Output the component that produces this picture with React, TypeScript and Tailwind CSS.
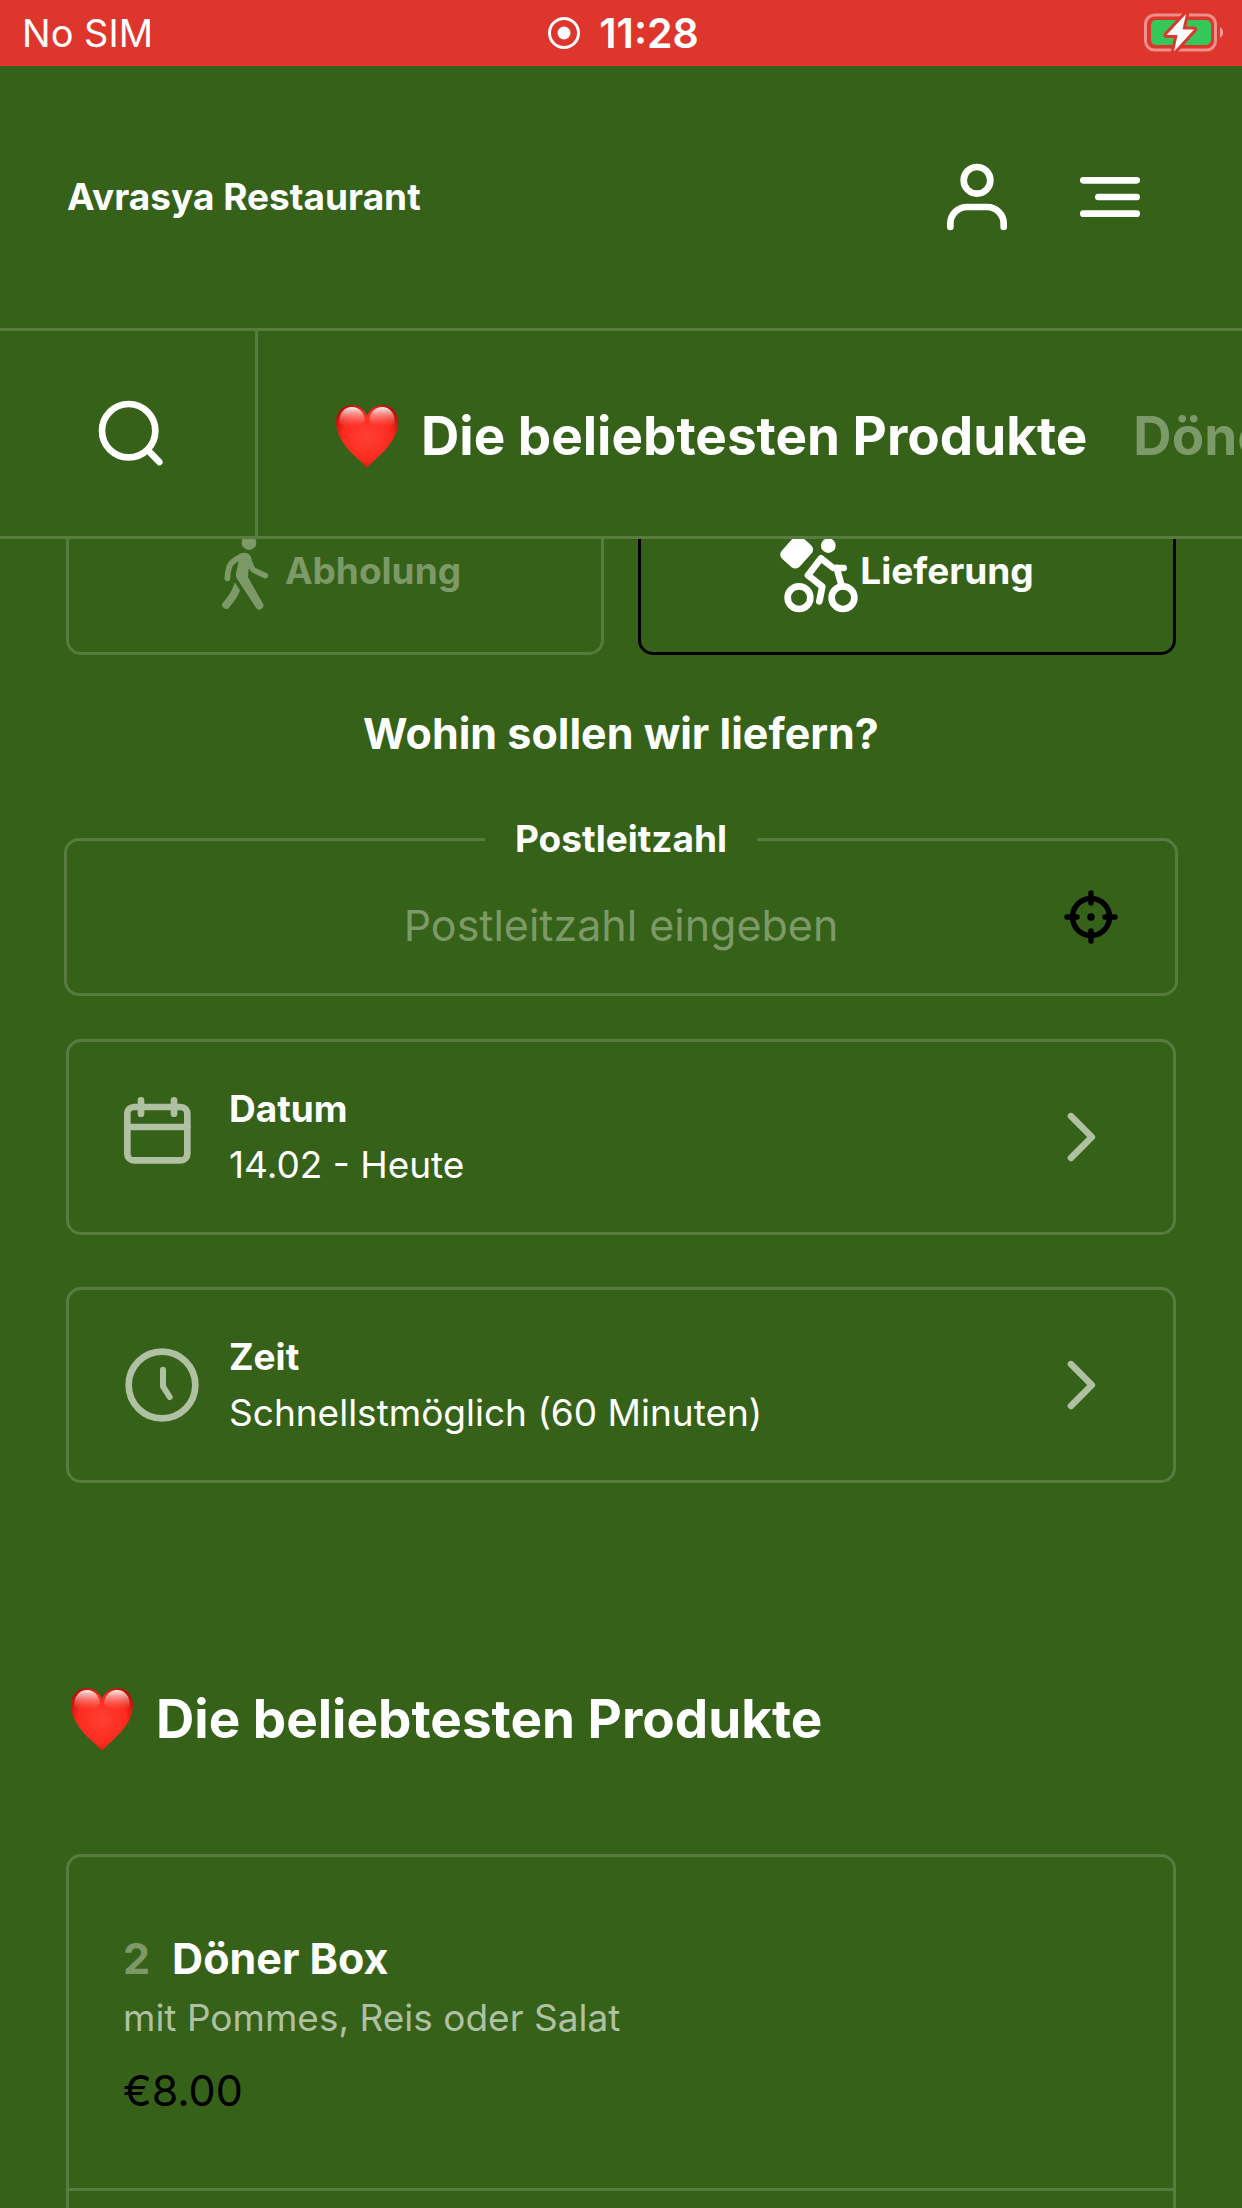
import { useState } from 'react';
import type { ReactNode } from 'react';

const categories = ['Die beliebtesten Produkte', 'Döner'];

const products = [
  { id: 2, name: 'Döner Box', description: 'mit Pommes, Reis oder Salat', price: '€8.00' },
];

function HeartIcon() {
  return (
    <svg viewBox="0 0 72 72" className="h-[72px] w-[72px] shrink-0" aria-hidden="true">
      <defs>
        <radialGradient id="heart-body" cx="0.5" cy="0.5" r="0.6">
          <stop offset="0" stopColor="#ff4034" />
          <stop offset="0.65" stopColor="#fd2a1f" />
          <stop offset="1" stopColor="#b50d03" />
        </radialGradient>
        <linearGradient id="heart-shine" x1="0" y1="0" x2="0" y2="1">
          <stop offset="0" stopColor="#fff" stopOpacity="0.95" />
          <stop offset="1" stopColor="#ff6a60" stopOpacity="0" />
        </linearGradient>
      </defs>
      <path
        d="M36 68C29 59 5 44 5 22C5 12 12 5 20.500 5C28 5 33.500 9.500 36 16C38.500 9.500 44 5 51.500 5C60 5 67 12 67 22C67 44 43 59 36 68Z"
        fill="url(#heart-body)"
      />
      <path d="M8.500 24C7 13 14 7 21 7C28 7 32.500 12 34 20C30 28 14 30 8.500 24Z" fill="url(#heart-shine)" />
      <path d="M63.500 24C65 13 58 7 51 7C44 7 39.500 12 38 20C42 28 58 30 63.500 24Z" fill="url(#heart-shine)" />
    </svg>
  );
}

function LineIcon({ children }: { children: ReactNode }) {
  return (
    <svg
      viewBox="0 0 24 24"
      className="h-20 w-20 shrink-0"
      fill="none"
      stroke="currentColor"
      strokeWidth="2"
      strokeLinecap="round"
      strokeLinejoin="round"
      aria-hidden="true"
    >
      {children}
    </svg>
  );
}

function WalkerIcon() {
  return (
    <svg viewBox="12 -3 180 252" className="h-[84px] w-[60px] shrink-0" fill="none" aria-hidden="true">
      <circle cx="132" cy="38" r="22" fill="currentColor" />
      {/* torso and front leg */}
      <path
        d="M100 74Q112 67 124 69Q134 71 138 82L143 102L131 118L129 142L173 219A12 12 0 0 1 153 233L97 148Q91 140 93 130L100 100Z"
        fill="currentColor"
      />
      {/* rear leg */}
      <path d="M89 157L105 181Q98 203 72 233A12 12 0 0 1 53 219Q82 187 89 157Z" fill="currentColor" />
      <g stroke="currentColor" strokeWidth="17" strokeLinecap="round" strokeLinejoin="round">
        <path d="M110 79Q80 92 73 109Q68 125 67 145" />
        <path d="M131 92L141 114Q144 120 151 123L181 137" />
      </g>
    </svg>
  );
}

function CourierIcon() {
  return (
    <svg viewBox="60 -3 240 252" className="h-[84px] w-20 shrink-0" fill="none" aria-hidden="true">
      <rect x="74" y="22" width="72" height="88" rx="17" fill="currentColor" transform="rotate(42 110 66)" />
      <circle cx="205" cy="47" r="22" fill="currentColor" />
      <g stroke="currentColor" strokeWidth="20" strokeLinecap="round" strokeLinejoin="round">
        <circle cx="117" cy="203" r="34" />
        <circle cx="249" cy="203" r="34" />
        <path d="M178 214L187 170L144 136L183 85L220 114H251" />
        <path d="M230 114L243 160" />
      </g>
    </svg>
  );
}

function BatteryIcon() {
  return (
    <svg viewBox="0 0 80 40" className="h-10 w-20" aria-hidden="true">
      <rect x="1.500" y="2" width="70" height="35" rx="9" fill="none" stroke="#fff" strokeOpacity="0.45" strokeWidth="3" />
      <path d="M76 14c4 2 4 9 0 11Z" fill="#fff" fillOpacity="0.5" />
      <rect x="7" y="7" width="60" height="25" rx="5" fill="#34c759" />
      <path
        d="M42 1L22.500 22H33.500L30 38.500L50 16.500H38.500Z"
        fill="#fff"
        stroke="#de362d"
        strokeWidth="6"
        strokeLinejoin="round"
        paintOrder="stroke"
      />
    </svg>
  );
}

function StatusBar() {
  return (
    <div className="grid h-[66px] grid-cols-3 items-center bg-[#de362d] pl-[22px] pr-[18px]">
      <span className="text-[38px] leading-[48px]">No SIM</span>
      <div className="flex items-center justify-center gap-[18px]">
        <svg viewBox="0 0 34 34" className="h-[34px] w-[34px]" aria-hidden="true">
          <circle cx="17" cy="17" r="14.500" fill="none" stroke="#fff" strokeWidth="3" />
          <circle cx="17" cy="17" r="6.500" fill="#fff" />
        </svg>
        <span className="text-[41px] font-semibold leading-[48px]">11:28</span>
      </div>
      <div className="flex justify-end">
        <BatteryIcon />
      </div>
    </div>
  );
}

interface OptionCardProps {
  icon: ReactNode;
  label: string;
  value: string;
}

function OptionCard({ icon, label, value }: OptionCardProps) {
  return (
    <button
      type="button"
      className="flex h-[196px] w-full items-center gap-[27px] rounded-[15px] border-[3px] border-[#587c40] pl-[53px] pr-[52px] text-left"
    >
      <span className="text-[#afc0a3]">{icon}</span>
      <span className="flex flex-1 flex-col text-[37px] leading-[56px]">
        <span className="font-bold">{label}</span>
        <span>{value}</span>
      </span>
      <span className="text-[#afc0a3]">
        <LineIcon>
          <path d="M9 5.750L15.250 12L9 18.250" />
        </LineIcon>
      </span>
    </button>
  );
}

export default function App() {
  const [mode, setMode] = useState<'pickup' | 'delivery'>('delivery');
  const [zip, setZip] = useState('');

  const modeClass = (active: boolean) =>
    active ? 'border-black text-white' : 'border-[#587c40] text-[#7d9968]';

  return (
    <div className="flex h-screen flex-col overflow-hidden bg-[#366118] font-['Inter','Liberation_Sans',sans-serif] text-white">
      {/* Fixed top area */}
      <div className="relative z-10 shrink-0 bg-[#366118]">
        <StatusBar />
        <header className="flex h-[262px] items-center justify-between pl-[67px] pr-[92px]">
          <a href="#" className="text-[37px] font-bold leading-[48px]">Avrasya Restaurant</a>
          <div className="flex gap-[53px]">
            <button type="button" aria-label="Konto">
              <LineIcon>
                <circle cx="12" cy="7" r="4" />
                <path d="M4 21v-1a5 5 0 0 1 5-5h6a5 5 0 0 1 5 5v1" />
              </LineIcon>
            </button>
            <button type="button" aria-label="Menü">
              <LineIcon>
                <path d="M4 7h16M8.500 12H20M4 17h16" />
              </LineIcon>
            </button>
          </div>
        </header>
        <div className="flex h-[211px] border-y-[3px] border-[#587c40]">
          <button
            type="button"
            aria-label="Suche"
            className="flex w-[258px] shrink-0 items-center border-r-[3px] border-[#587c40] pl-[92px]"
          >
            <LineIcon>
              <circle cx="11" cy="11" r="8" />
              <path d="M20.200 20.400L16.900 17" />
            </LineIcon>
          </button>
          <nav className="flex flex-1 items-center gap-[46px] overflow-hidden whitespace-nowrap pl-[73px] pt-1 text-[53px] font-bold leading-[72px]">
            {categories.map((name, i) => (
              <a
                key={name}
                href="#produkte"
                className={i === 0 ? 'flex items-center gap-[18px]' : 'text-[#7d9968]'}
              >
                {i === 0 && <HeartIcon />}
                {name}
              </a>
            ))}
          </nav>
        </div>
      </div>

      <main className="min-h-0 flex-1 px-[66px]">
        {/* Pickup / delivery switch, partly scrolled under the top area */}
        <div className="-mt-[52px] grid grid-cols-2 gap-[34px] text-[37px] font-bold leading-[48px]">
          <button
            type="button"
            onClick={() => setMode('pickup')}
            className={`flex h-[168px] items-center justify-center gap-4 rounded-[15px] border-[3px] ${modeClass(mode === 'pickup')}`}
          >
            <WalkerIcon />
            Abholung
          </button>
          <button
            type="button"
            onClick={() => setMode('delivery')}
            className={`flex h-[168px] items-center justify-center rounded-[15px] border-[3px] ${modeClass(mode === 'delivery')}`}
          >
            <CourierIcon />
            Lieferung
          </button>
        </div>

        <h2 className="mt-12 text-center text-[43px] font-bold leading-[60px]">Wohin sollen wir liefern?</h2>

        <fieldset className="-mx-0.5 mt-[52px] rounded-[15px] border-[3px] border-[#587c40]">
          <legend className="mx-auto px-[30px] text-[37px] font-bold leading-[48px]">
            <label htmlFor="zip">Postleitzahl</label>
          </legend>
          <div className="grid grid-cols-[111px_1fr_111px]">
            <input
              id="zip"
              value={zip}
              onChange={(e) => setZip(e.target.value)}
              placeholder="Postleitzahl eingeben"
              className="col-start-2 mb-1.5 h-[124px] w-full min-w-0 bg-transparent text-center text-[43px] outline-none placeholder:text-[#7d9968]"
            />
            <button type="button" aria-label="Standort verwenden" className="flex h-[108px] items-center text-black">
              <svg viewBox="0 0 54 54" className="h-[54px] w-[54px]" fill="none" stroke="currentColor" strokeWidth="5.500" strokeLinecap="round" aria-hidden="true">
                <circle cx="27" cy="27" r="18.500" />
                <path d="M27 3v10M27 41v10M3 27h10M41 27h10" />
                <circle cx="27" cy="27" r="3.800" fill="currentColor" stroke="none" />
              </svg>
            </button>
          </div>
        </fieldset>

        <div className="mt-[43px] flex flex-col gap-[52px]">
          <OptionCard
            label="Datum"
            value="14.02 - Heute"
            icon={
              <LineIcon>
                <rect x="1.600" y="3" width="18" height="16" rx="2" />
                <path d="M1.600 9h18M5.700 1v4M15.600 1v4" />
              </LineIcon>
            }
          />
          <OptionCard
            label="Zeit"
            value="Schnellstmöglich (60 Minuten)"
            icon={
              <LineIcon>
                <circle cx="12" cy="12" r="10" />
                <path d="M12.300 7.400v5l2 3.200" strokeWidth="1.800" />
              </LineIcon>
            }
          />
        </div>

        <section id="produkte" className="mt-[200px]">
          <h2 className="flex items-center gap-[18px] text-[53px] font-bold leading-[72px]">
            <HeartIcon />
            Die beliebtesten Produkte
          </h2>
          <ul className="mt-[99px] rounded-[15px] border-[3px] border-[#587c40] pb-16">
            {products.map((product) => (
              <li key={product.id} className="border-b-[3px] border-[#587c40] px-[54px] pb-[68px] pt-[73px]">
                <h3 className="flex gap-[22px] text-[43px] font-bold leading-[56px]">
                  <span className="text-[#7d9968]">{product.id}</span>
                  {product.name}
                </h3>
                <p className="mt-1.5 text-[37px] leading-[52px] text-[#afc0a3]">{product.description}</p>
                <p className="mt-4 text-[43px] leading-[60px] text-black">{product.price}</p>
              </li>
            ))}
          </ul>
        </section>
      </main>
    </div>
  );
}
